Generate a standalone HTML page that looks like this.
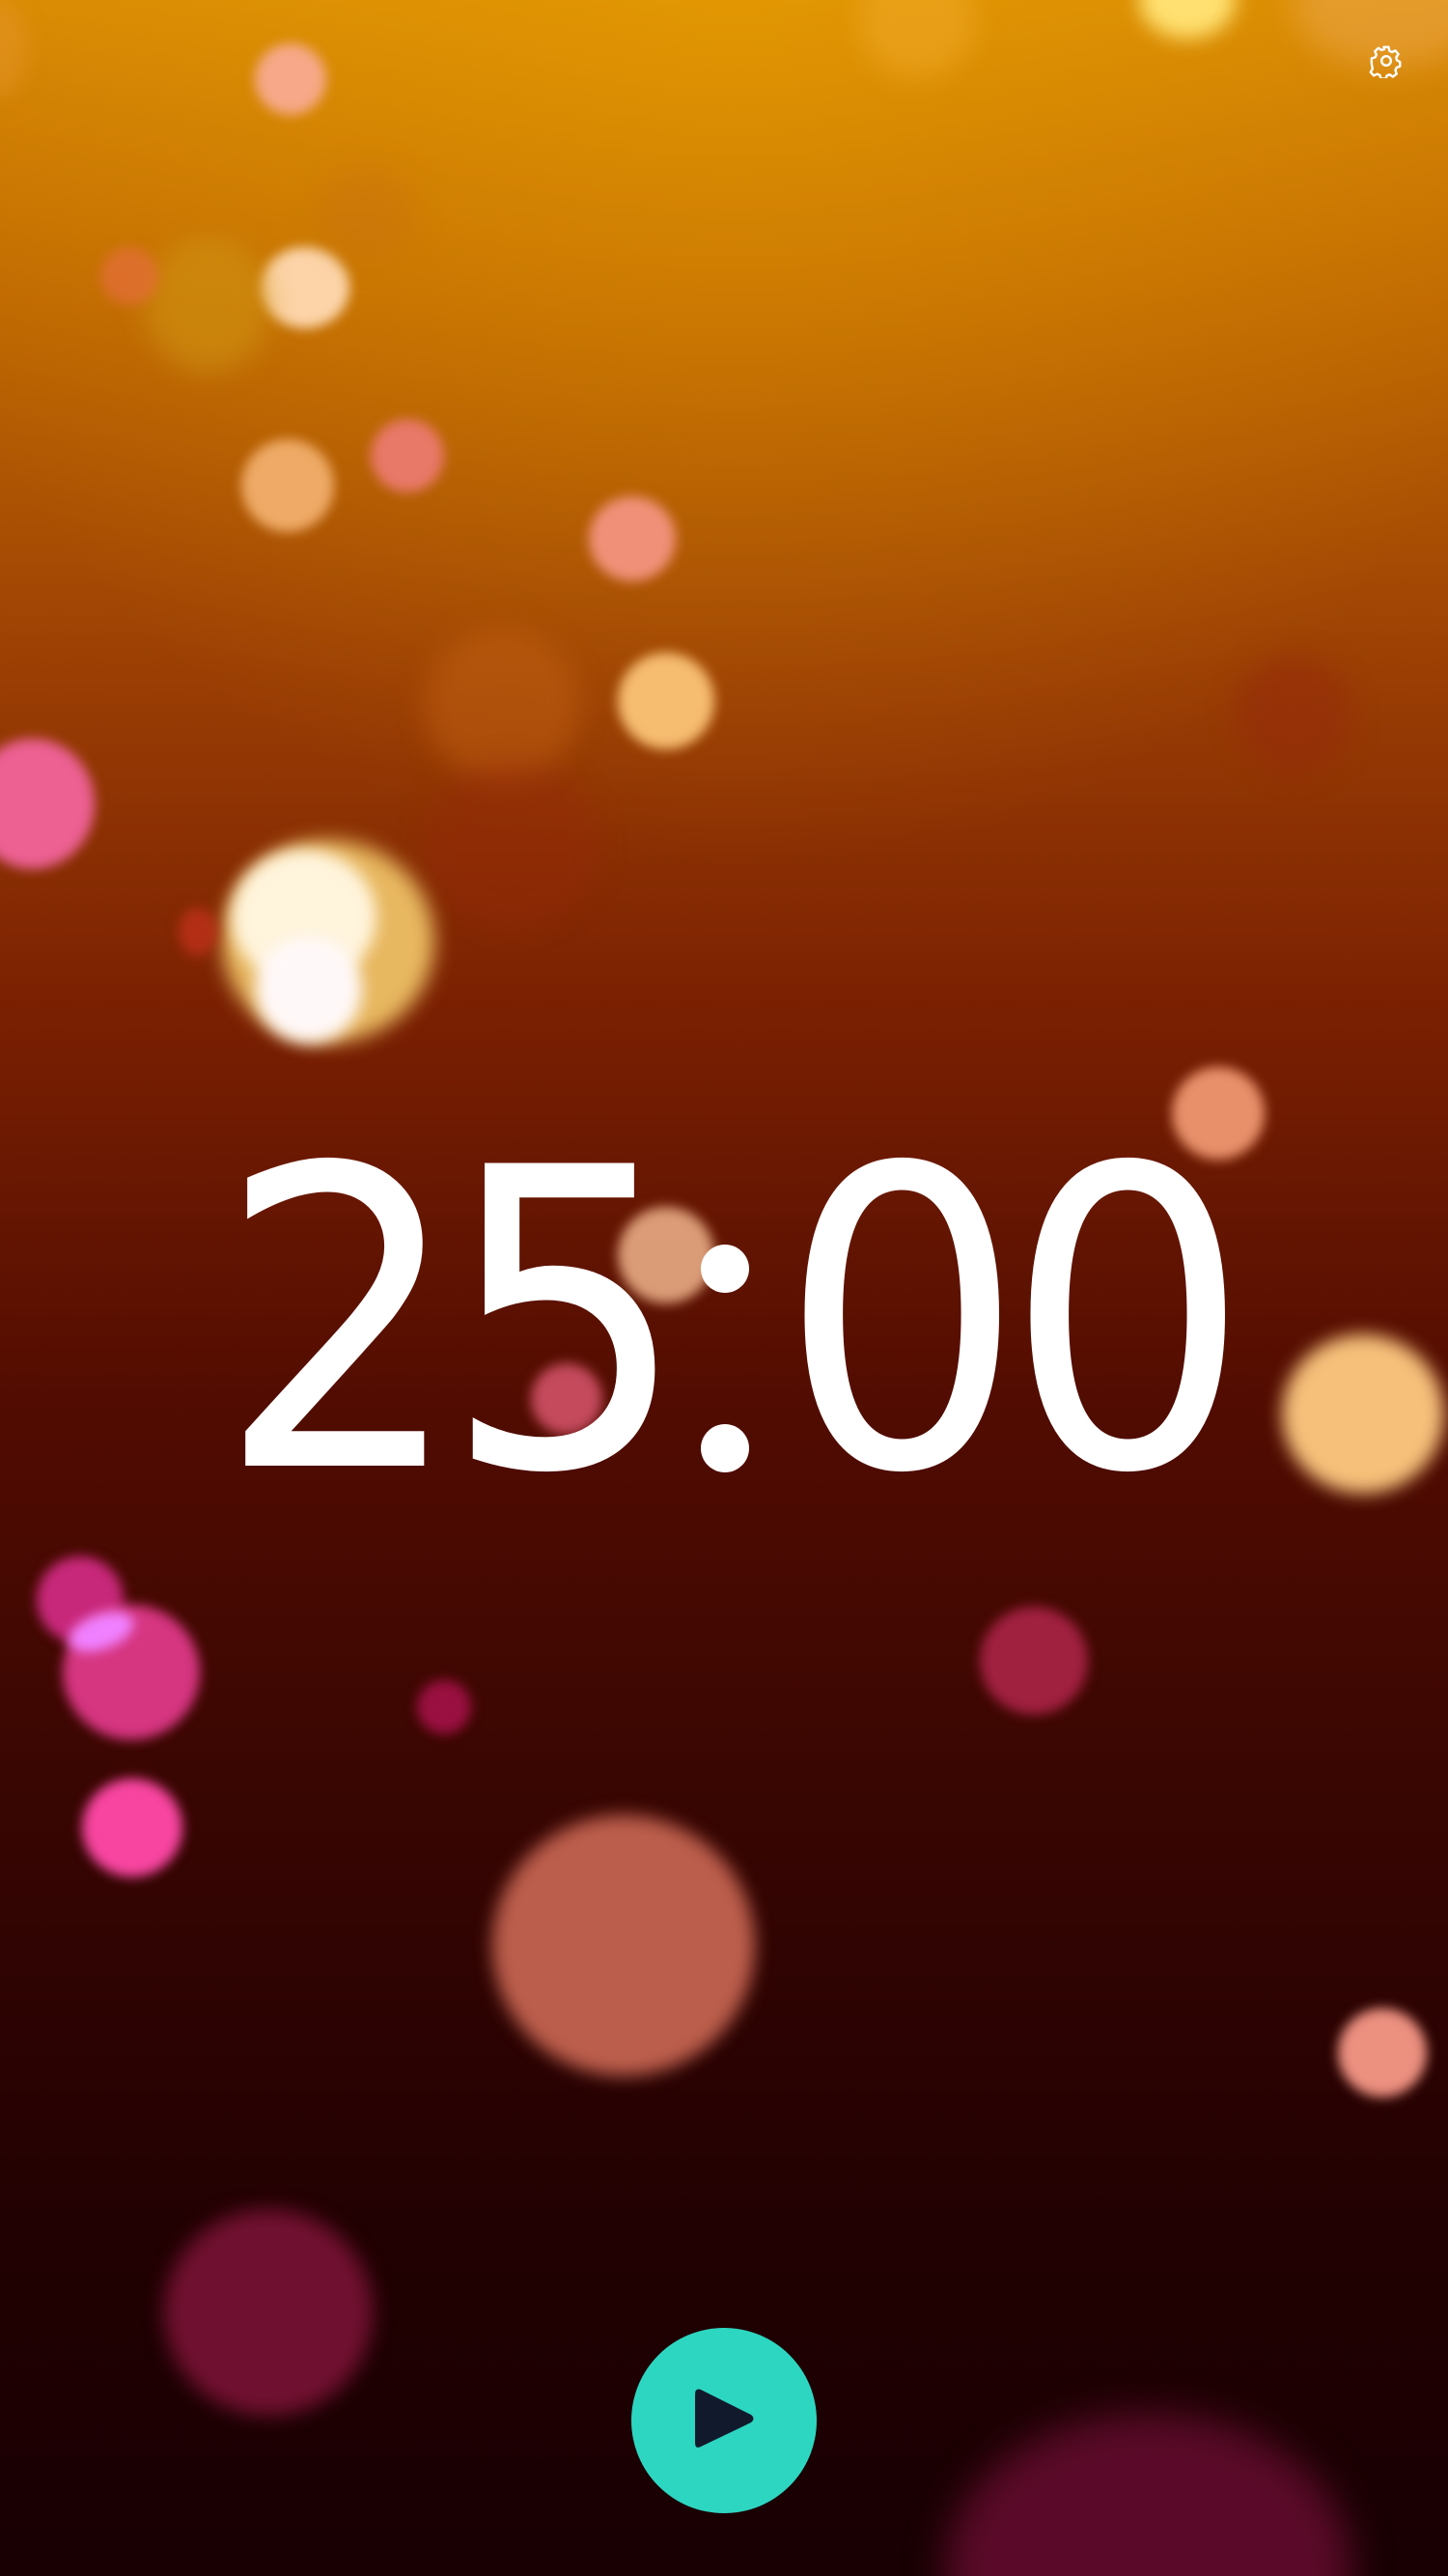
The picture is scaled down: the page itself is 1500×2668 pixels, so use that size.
<!DOCTYPE html>
<html><head><meta charset="utf-8"><style>
html,body{margin:0;padding:0;background:#180003;width:1500px;height:2668px;overflow:hidden}
#w{width:1500px;height:2668px;position:relative;overflow:hidden;
background:linear-gradient(180deg,#d88a04 0px,#c06a02 300px,#9a3e04 700px,#7a2002 1050px,#520c01 1450px,#360502 1900px,#220102 2300px,#180003 2668px);}
.g{position:absolute;left:0;top:0;width:1500px;height:2668px;
background:radial-gradient(ellipse 900px 900px at 760px 0px,rgba(240,170,0,.4),rgba(240,170,0,0) 100%);}
.b{position:absolute;border-radius:50%;filter:blur(6px)}
.t{position:absolute;left:0;width:1500px;top:1130px;text-align:center;color:#fff;
font-family:"DejaVu Sans","Liberation Sans",sans-serif;font-size:430px;line-height:480px;letter-spacing:-22px;transform:scaleX(0.93)}
.t .c{color:transparent}
.d{position:absolute;width:50px;height:50px;border-radius:50%;background:#fff}
</style></head><body><div id="w">
<div class="g"></div>
<div class="b" style="left:264px;top:45px;width:74px;height:74px;background:#f6a888"></div>
<div class="b" style="left:270px;top:256px;width:92px;height:84px;background:#fcd4a8"></div>
<div class="b" style="left:150px;top:246px;width:130px;height:140px;background:rgba(210,150,20,.55);filter:blur(14px)"></div>
<div class="b" style="left:104px;top:256px;width:60px;height:60px;background:rgba(230,110,60,.7)"></div>
<div class="b" style="left:250px;top:455px;width:96px;height:96px;background:#eeaa66"></div>
<div class="b" style="left:384px;top:434px;width:76px;height:76px;background:#e87868"></div>
<div class="b" style="left:610px;top:514px;width:90px;height:88px;background:#f09078"></div>
<div class="b" style="left:640px;top:676px;width:100px;height:100px;background:#f6bc70"></div>
<div class="b" style="left:440px;top:650px;width:160px;height:160px;background:rgba(200,100,20,.45);filter:blur(14px)"></div>
<div class="b" style="left:440px;top:790px;width:180px;height:170px;background:rgba(150,40,10,.4);filter:blur(14px)"></div>
<div class="b" style="left:-30px;top:765px;width:128px;height:135px;background:#ec6092"></div>
<div class="b" style="left:230px;top:870px;width:220px;height:210px;background:#e8b860;filter:blur(10px)"></div>
<div class="b" style="left:240px;top:880px;width:150px;height:140px;background:#fff4dc;filter:blur(8px)"></div>
<div class="b" style="left:265px;top:970px;width:110px;height:110px;background:#fff8f8;filter:blur(8px)"></div>
<div class="b" style="left:185px;top:940px;width:40px;height:50px;background:rgba(200,50,30,.7)"></div>
<div class="b" style="left:1280px;top:680px;width:120px;height:120px;background:rgba(150,40,10,.5);filter:blur(14px)"></div>
<div class="b" style="left:1214px;top:1105px;width:96px;height:96px;background:#e8906a"></div>
<div class="b" style="left:640px;top:1250px;width:100px;height:100px;background:rgba(240,180,140,.85)"></div>
<div class="b" style="left:550px;top:1412px;width:74px;height:74px;background:#c44a5c"></div>
<div class="b" style="left:1328px;top:1382px;width:168px;height:165px;background:#f6c07a;filter:blur(9px)"></div>
<div class="b" style="left:38px;top:1612px;width:90px;height:90px;background:#c8287a"></div>
<div class="b" style="left:65px;top:1662px;width:142px;height:140px;background:#d63580"></div>
<div class="b" style="left:70px;top:1672px;width:70px;height:36px;background:#f080ff;transform:rotate(-20deg)"></div>
<div class="b" style="left:85px;top:1842px;width:104px;height:102px;background:#f845a0"></div>
<div class="b" style="left:432px;top:1740px;width:56px;height:56px;background:#9a1040"></div>
<div class="b" style="left:1015px;top:1664px;width:112px;height:112px;background:#a02040"></div>
<div class="b" style="left:510px;top:1880px;width:272px;height:270px;background:#bc5e4c;filter:blur(9px)"></div>
<div class="b" style="left:1386px;top:2080px;width:92px;height:92px;background:#ec9080"></div>
<div class="b" style="left:170px;top:2288px;width:216px;height:214px;background:#701030;filter:blur(10px)"></div>
<div class="b" style="left:980px;top:2500px;width:420px;height:320px;background:#5a0a28;filter:blur(20px)"></div>
<div class="b" style="left:890px;top:-40px;width:120px;height:120px;background:rgba(240,170,40,.55);filter:blur(14px)"></div>
<div class="b" style="left:1180px;top:-40px;width:100px;height:80px;background:#ffe070;filter:blur(10px)"></div>
<div class="b" style="left:1340px;top:-60px;width:200px;height:130px;background:rgba(240,170,80,.5);filter:blur(16px)"></div>
<div class="b" style="left:-40px;top:0px;width:70px;height:100px;background:rgba(230,150,40,.5);filter:blur(10px)"></div>
<div class="b" style="left:330px;top:170px;width:100px;height:100px;background:rgba(200,110,20,.3);filter:blur(14px)"></div>
<div class="t">25<span class="c">:</span>00</div>
<div class="d" style="left:726px;top:1289px"></div>
<div class="d" style="left:726px;top:1475px"></div>
<svg style="position:absolute;left:1418px;top:45px" width="36" height="36" viewBox="0 0 24 24" fill="none" stroke="#fff" stroke-width="1.6" stroke-linejoin="round">
<path d="M10.3 2.5h3.4l.5 2.6 1.7.9 2.4-1.1 2.1 2.5-1.5 2.2.4 1.9 2.2 1.3v3l-2.4.9-.8 1.8.9 2.5-2.6 2-2.1-1.5-1.9.5-1 2.4h-3.2l-.8-2.5-1.8-.8-2.4 1.1-2.2-2.4 1.4-2.2-.4-1.9L1.9 13.4V10.3l2.5-.7.8-1.8-1-2.4 2.4-2.2 2.2 1.4 1.9-.6z"/>
<circle cx="12" cy="12" r="3.2"/></svg>
<div style="position:absolute;left:654px;top:2411px;width:192px;height:192px;border-radius:50%;background:#2dd6c1"></div>
<svg style="position:absolute;left:710px;top:2470px" width="80" height="80" viewBox="0 0 80 80">
<path d="M10 10 Q10 3 16 5 L68 31 Q73 35 68 39 L16 64 Q10 67 10 60 Z" fill="#111a2c"/></svg>
</div></body></html>
